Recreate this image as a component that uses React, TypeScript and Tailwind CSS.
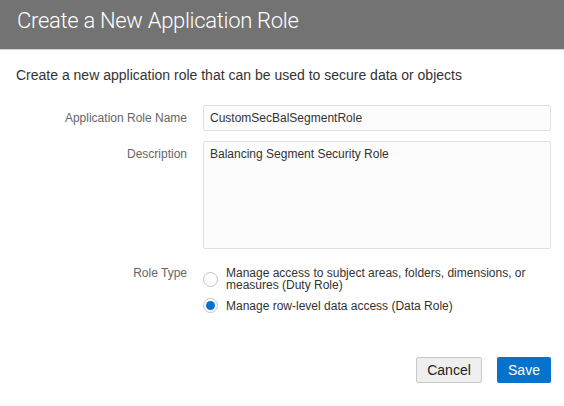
import { useState } from "react";

const roleTypes = [
  {
    value: "duty",
    label: "Manage access to subject areas, folders, dimensions, or measures (Duty Role)",
  },
  { value: "data", label: "Manage row-level data access (Data Role)" },
];

function Radio({ checked }: { checked: boolean }) {
  return (
    <span className="flex h-[15px] w-[15px] shrink-0 items-center justify-center rounded-full border border-[#c4c4c4] bg-white">
      {checked ? <span className="h-[9px] w-[9px] rounded-full bg-[#0572ce]" /> : null}
    </span>
  );
}

export default function App() {
  const [name, setName] = useState("CustomSecBalSegmentRole");
  const [description, setDescription] = useState("Balancing Segment Security Role");
  const [roleType, setRoleType] = useState("data");

  return (
    <div
      className="flex h-[406px] w-[564px] flex-col bg-white text-[#333]"
      style={{ fontFamily: '"Liberation Sans", Arial, sans-serif' }}
    >
      <header className="h-[50px] shrink-0 border-b border-[#d4d4d4] bg-[#737373] px-[17px] pt-[7px]">
        <h1
          className="text-[22px] leading-[28px] font-light tracking-[-0.3px] text-white"
          style={{ fontFamily: 'Roboto, "Liberation Sans", sans-serif' }}
        >
          Create a New Application Role
        </h1>
      </header>

      <p className="mt-[15px] px-[16px] text-[14px] leading-[20px] text-[#333]">
        Create a new application role that can be used to secure data or objects
      </p>

      <div className="mt-[20px] grid grid-cols-[171px_1fr] gap-x-[16px] pl-[16px] pr-[13px] text-[12px]">
        <label className="flex h-[26px] items-center justify-end text-[#666]">
          Application Role Name
        </label>
        <input
          value={name}
          onChange={(e) => setName(e.target.value)}
          className="h-[26px] w-full rounded-[2px] border border-[#dfdfdf] bg-[#fcfcfc] px-[6px] text-[12px] text-[#333] outline-none"
        />

        <label className="mt-[15px] text-right leading-[16px] text-[#666]">Description</label>
        <textarea
          value={description}
          onChange={(e) => setDescription(e.target.value)}
          className="mt-[10px] h-[108px] w-full resize-none rounded-[2px] border border-[#dfdfdf] bg-[#fcfcfc] px-[6px] pt-[4px] text-[12px] leading-[16px] text-[#333] outline-none"
        />

        <label className="mt-[18px] text-right leading-[12px] text-[#666]">Role Type</label>
        <div className="mt-[18px] flex flex-col gap-[7px]">
          {roleTypes.map((type) => (
            <button
              key={type.value}
              type="button"
              onClick={() => setRoleType(type.value)}
              className="flex items-center gap-[8px] text-left leading-[12px] text-[#333]"
            >
              <Radio checked={roleType === type.value} />
              <span>{type.label}</span>
            </button>
          ))}
        </div>
      </div>

      <div className="mt-[44px] flex justify-end gap-[15px] pr-[13px] text-[14px]">
        <button
          type="button"
          className="h-[26px] w-[66px] rounded-[2px] border border-[#c9c9c9] bg-[#efefef] text-[#222]"
        >
          Cancel
        </button>
        <button
          type="button"
          className="h-[26px] w-[54px] rounded-[2px] bg-[#0572ce] text-white"
        >
          Save
        </button>
      </div>
    </div>
  );
}
